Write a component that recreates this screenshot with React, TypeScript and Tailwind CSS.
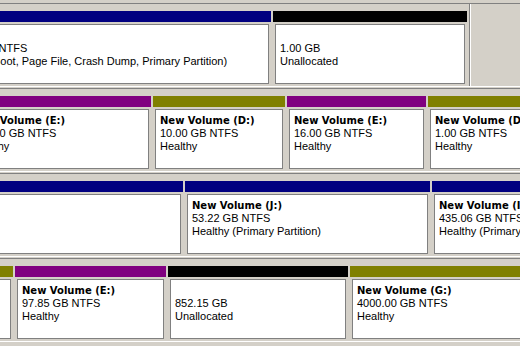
import React from 'react'

const BAR = {
  blue: 'bg-[#000080]',
  purple: 'bg-[#800080]',
  olive: 'bg-[#808000]',
  black: 'bg-black',
}

type Part = {
  cls: string
  bar: keyof typeof BAR
  lines: [string, string, string]
}

type Disk = { parts: Part[]; edge?: boolean }

const disks: Disk[] = [
  {
    edge: true,
    parts: [
      { cls: '-ml-[58px] w-[329px]', bar: 'blue', lines: ['(C:)', '48.83 GB NTFS', 'Healthy (Boot, Page File, Crash Dump, Primary Partition)'] },
      { cls: 'w-[194px]', bar: 'black', lines: ['', '1.00 GB', 'Unallocated'] },
    ],
  },
  {
    parts: [
      { cls: '-ml-[35px] w-[186px]', bar: 'purple', lines: ['New Volume (E:)', '100.00 GB NTFS', 'Healthy'] },
      { cls: 'w-[132px]', bar: 'olive', lines: ['New Volume (D:)', '10.00 GB NTFS', 'Healthy'] },
      { cls: 'w-[139px]', bar: 'purple', lines: ['New Volume (E:)', '16.00 GB NTFS', 'Healthy'] },
      { cls: 'w-[200px]', bar: 'olive', lines: ['New Volume (D:)', '1.00 GB NTFS', 'Healthy'] },
    ],
  },
  {
    parts: [
      { cls: '-ml-[250px] w-[433px]', bar: 'blue', lines: ['New Volume (F:)', '200.00 GB NTFS', 'Healthy (Primary Partition)'] },
      { cls: 'w-[245px]', bar: 'blue', lines: ['New Volume (J:)', '53.22 GB NTFS', 'Healthy (Primary Partition)'] },
      { cls: 'w-[200px]', bar: 'blue', lines: ['New Volume (I:)', '435.06 GB NTFS', 'Healthy (Primary Partition)'] },
    ],
  },
  {
    parts: [
      { cls: '-ml-[150px] w-[163px]', bar: 'olive', lines: ['New Volume (F:)', '50.00 GB NTFS', 'Healthy'] },
      { cls: 'w-[151px]', bar: 'purple', lines: ['New Volume (E:)', '97.85 GB NTFS', 'Healthy'] },
      { cls: 'w-[180px]', bar: 'black', lines: ['', '852.15 GB', 'Unallocated'] },
      { cls: 'w-[300px]', bar: 'olive', lines: ['New Volume (G:)', '4000.00 GB NTFS', 'Healthy'] },
    ],
  },
]

function Partition({ part }: { part: Part }) {
  const [name, size, status] = part.lines
  return (
    <div className={`flex shrink-0 flex-col ${part.cls}`}>
      <div className={`h-[11px] ${BAR[part.bar]}`} />
      <div className="mx-[2px] mt-[2px] h-[60px] overflow-hidden whitespace-nowrap border border-[#808080] bg-white pl-[4px] pt-[4px] text-[11px] leading-[13px] text-black">
        <div className="h-[13px] font-['DejaVu_Sans',sans-serif] text-[10px] font-bold">{name}</div>
        <div>{size}</div>
        <div>{status}</div>
      </div>
    </div>
  )
}

export default function App() {
  return (
    <div className="h-[346px] w-[520px] overflow-hidden bg-[#d4d0c8] font-['Liberation_Sans',Arial,sans-serif]">
      <div className="flex flex-col gap-px pt-[3px]">
        {disks.map((disk, i) => (
          <div key={i} className="flex gap-[2px] border-y border-t-[#808080] border-b-white pb-[2px] pt-[7px]">
            {disk.parts.map((p, j) => (
              <Partition key={j} part={p} />
            ))}
            {disk.edge && (
              <div className="-mt-[7px] -mb-[2px] flex shrink-0">
                <div className="w-px bg-[#808080]" />
                <div className="w-px bg-white" />
              </div>
            )}
          </div>
        ))}
      </div>
    </div>
  )
}
